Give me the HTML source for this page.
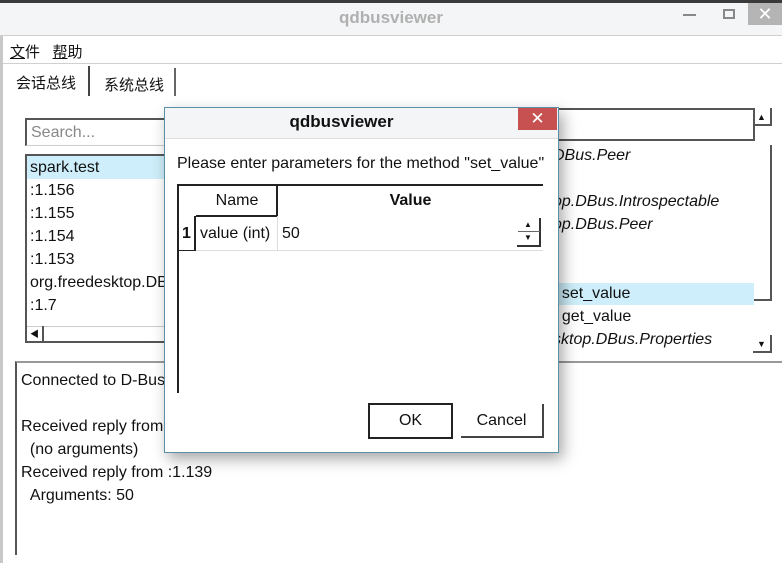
<!DOCTYPE html>
<html><head><meta charset="utf-8"><style>
*{margin:0;padding:0;box-sizing:border-box}
body{width:782px;height:563px;overflow:hidden;background:#fff;font-family:"Liberation Sans","Noto Sans CJK SC",sans-serif;font-size:16px;color:#111;position:relative}
.a{position:absolute;white-space:nowrap}
</style></head><body>
<div class="a" style="left:0;top:0;width:782px;height:3px;background:#3a3a3a"></div>
<div class="a" style="left:0;top:3px;width:782px;height:33px;background:#f4f5f6;border-bottom:1px solid #d0d0d0"></div>
<div class="a" style="left:0;top:8px;width:782px;text-align:center;font-weight:bold;font-size:17px;color:#b0b0b0">qdbusviewer</div>
<div class="a" style="left:683px;top:14px;width:13px;height:2px;background:#888"></div>
<div class="a" style="left:723px;top:9px;width:12px;height:10px;border:2px solid #888"></div>
<div class="a" style="left:748px;top:3px;width:34px;height:22px;background:#b4b4b4;color:#fff;text-align:center;font-size:18px;line-height:22px">✕</div>
<div class="a" style="left:0;top:36px;width:3px;height:527px;background:#c8c8c8"></div>
<div class="a" style="left:10px;top:41px;font-size:15px"><u>文</u>件&nbsp;&nbsp;&nbsp;<u>帮</u>助</div>
<div class="a" style="left:3px;top:63px;width:779px;height:1px;background:#d0d0d0"></div>
<div class="a" style="left:16px;top:72px;font-size:15px">会话总线</div>
<div class="a" style="left:88px;top:66px;width:2px;height:30px;background:#444"></div>
<div class="a" style="left:104px;top:74px;font-size:15px">系统总线</div>
<div class="a" style="left:174px;top:68px;width:2px;height:28px;background:#666"></div>
<div class="a" style="left:25px;top:118px;width:150px;height:28px;border:2px solid #555;border-right:none;border-bottom:1px solid #ccc;color:#888;padding:4px 4px;font-size:16px">Search...</div>
<div class="a" style="left:25px;top:154px;width:150px;height:189px;border:2px solid #555;border-right:none;font-size:16px;line-height:23px;overflow:hidden">
<div style="background:#cdeefa;padding-left:3px">spark.test</div>
<div style="padding-left:3px">:1.156</div><div style="padding-left:3px">:1.155</div><div style="padding-left:3px">:1.154</div><div style="padding-left:3px">:1.153</div><div style="padding-left:3px">org.freedesktop.DBus</div><div style="padding-left:3px">:1.7</div>
<div class="a" style="left:0;top:170px;width:150px;height:17px;background:#fff;border-top:1px solid #ccc"></div>
<div class="a" style="left:0;top:170px;width:17px;height:17px;border-right:2px solid #555;font-size:9px;line-height:17px;text-align:center">◀</div>
</div>
<div class="a" style="left:550px;top:108px;width:205px;height:33px;border:2px solid #555;border-left:none"></div>
<div class="a" style="left:753px;top:108px;width:19px;height:18px;border-right:2px solid #555;border-bottom:2px solid #555;font-size:9px;text-align:center;line-height:18px">▲</div>
<div class="a" style="left:560px;top:145px;width:212px;height:156px;border-right:2px solid #555;border-bottom:2px solid #555"></div>
<div class="a" style="left:553px;top:283px;width:201px;height:22px;background:#cdeefa"></div>
<div class="a" style="left:553px;top:144px;font-size:16px;line-height:23px;font-style:italic">DBus.Peer<br><br>op.DBus.Introspectable<br>op.DBus.Peer<br><br><br><span style="font-style:normal">: set_value</span><br><span style="font-style:normal">: get_value</span><br>sktop.DBus.Properties</div>
<div class="a" style="left:753px;top:335px;width:19px;height:18px;border-right:2px solid #555;border-bottom:2px solid #555;font-size:9px;text-align:center;line-height:18px">▼</div>
<div class="a" style="left:15px;top:361px;width:767px;height:194px;border-left:2px solid #555;border-top:2px solid #999"></div>
<div class="a" style="left:21px;top:369px;font-size:16px;line-height:23px">Connected to D-Bus.<br><br>Received reply from<br>&nbsp;&nbsp;(no arguments)<br>Received reply from :1.139<br>&nbsp;&nbsp;Arguments: 50</div>
<div class="a" style="left:164px;top:107px;width:395px;height:346px;background:#fff;border:1px solid #5a8fa8;box-shadow:4px 6px 14px rgba(0,0,0,.35)"></div>
<div class="a" style="left:165px;top:108px;width:393px;height:31px;background:#f4f5f6;border-bottom:1px solid #ddd"></div>
<div class="a" style="left:165px;top:112px;width:353px;text-align:center;font-weight:bold;font-size:17px">qdbusviewer</div>
<div class="a" style="left:518px;top:108px;width:39px;height:22px;background:#c75050;color:#fff;text-align:center;font-size:17px;line-height:22px">✕</div>
<div class="a" style="left:177px;top:155px;font-size:16px">Please enter parameters for the method "set_value"</div>
<div class="a" style="left:177px;top:184px;width:2px;height:209px;background:#222"></div>
<div class="a" style="left:177px;top:184px;width:366px;height:2px;background:#222"></div>
<div class="a" style="left:276px;top:184px;width:2px;height:32px;background:#222"></div>
<div class="a" style="left:196px;top:215px;width:82px;height:2px;background:#222"></div>
<div class="a" style="left:179px;top:216px;width:17px;height:35px;border-right:2px solid #222;border-bottom:1px solid #222"></div>
<div class="a" style="left:196px;top:250px;width:347px;height:1px;background:#ddd"></div>
<div class="a" style="left:277px;top:216px;width:1px;height:34px;background:#ddd"></div>
<div class="a" style="left:196px;top:192px;width:82px;text-align:center;font-size:16px">Name</div>
<div class="a" style="left:278px;top:192px;width:265px;text-align:center;font-size:16px;font-weight:bold">Value</div>
<div class="a" style="left:182px;top:225px;font-size:16px;font-weight:bold">1</div>
<div class="a" style="left:200px;top:225px;font-size:16px">value (int)</div>
<div class="a" style="left:282px;top:225px;font-size:16px">50</div>
<div class="a" style="left:517px;top:218px;width:24px;height:29px;border-right:2px solid #333;border-bottom:2px solid #333;font-size:8px;text-align:center;line-height:13px">▲<br>▼</div>
<div class="a" style="left:518px;top:231px;width:22px;height:1px;background:#666"></div>
<div class="a" style="left:368px;top:403px;width:85px;height:36px;border:2px solid #222;text-align:center;line-height:32px;font-size:16px">OK</div>
<div class="a" style="left:461px;top:404px;width:83px;height:34px;border-right:2px solid #444;border-bottom:2px solid #444;text-align:center;line-height:34px;font-size:16px">Cancel</div>
</body></html>
